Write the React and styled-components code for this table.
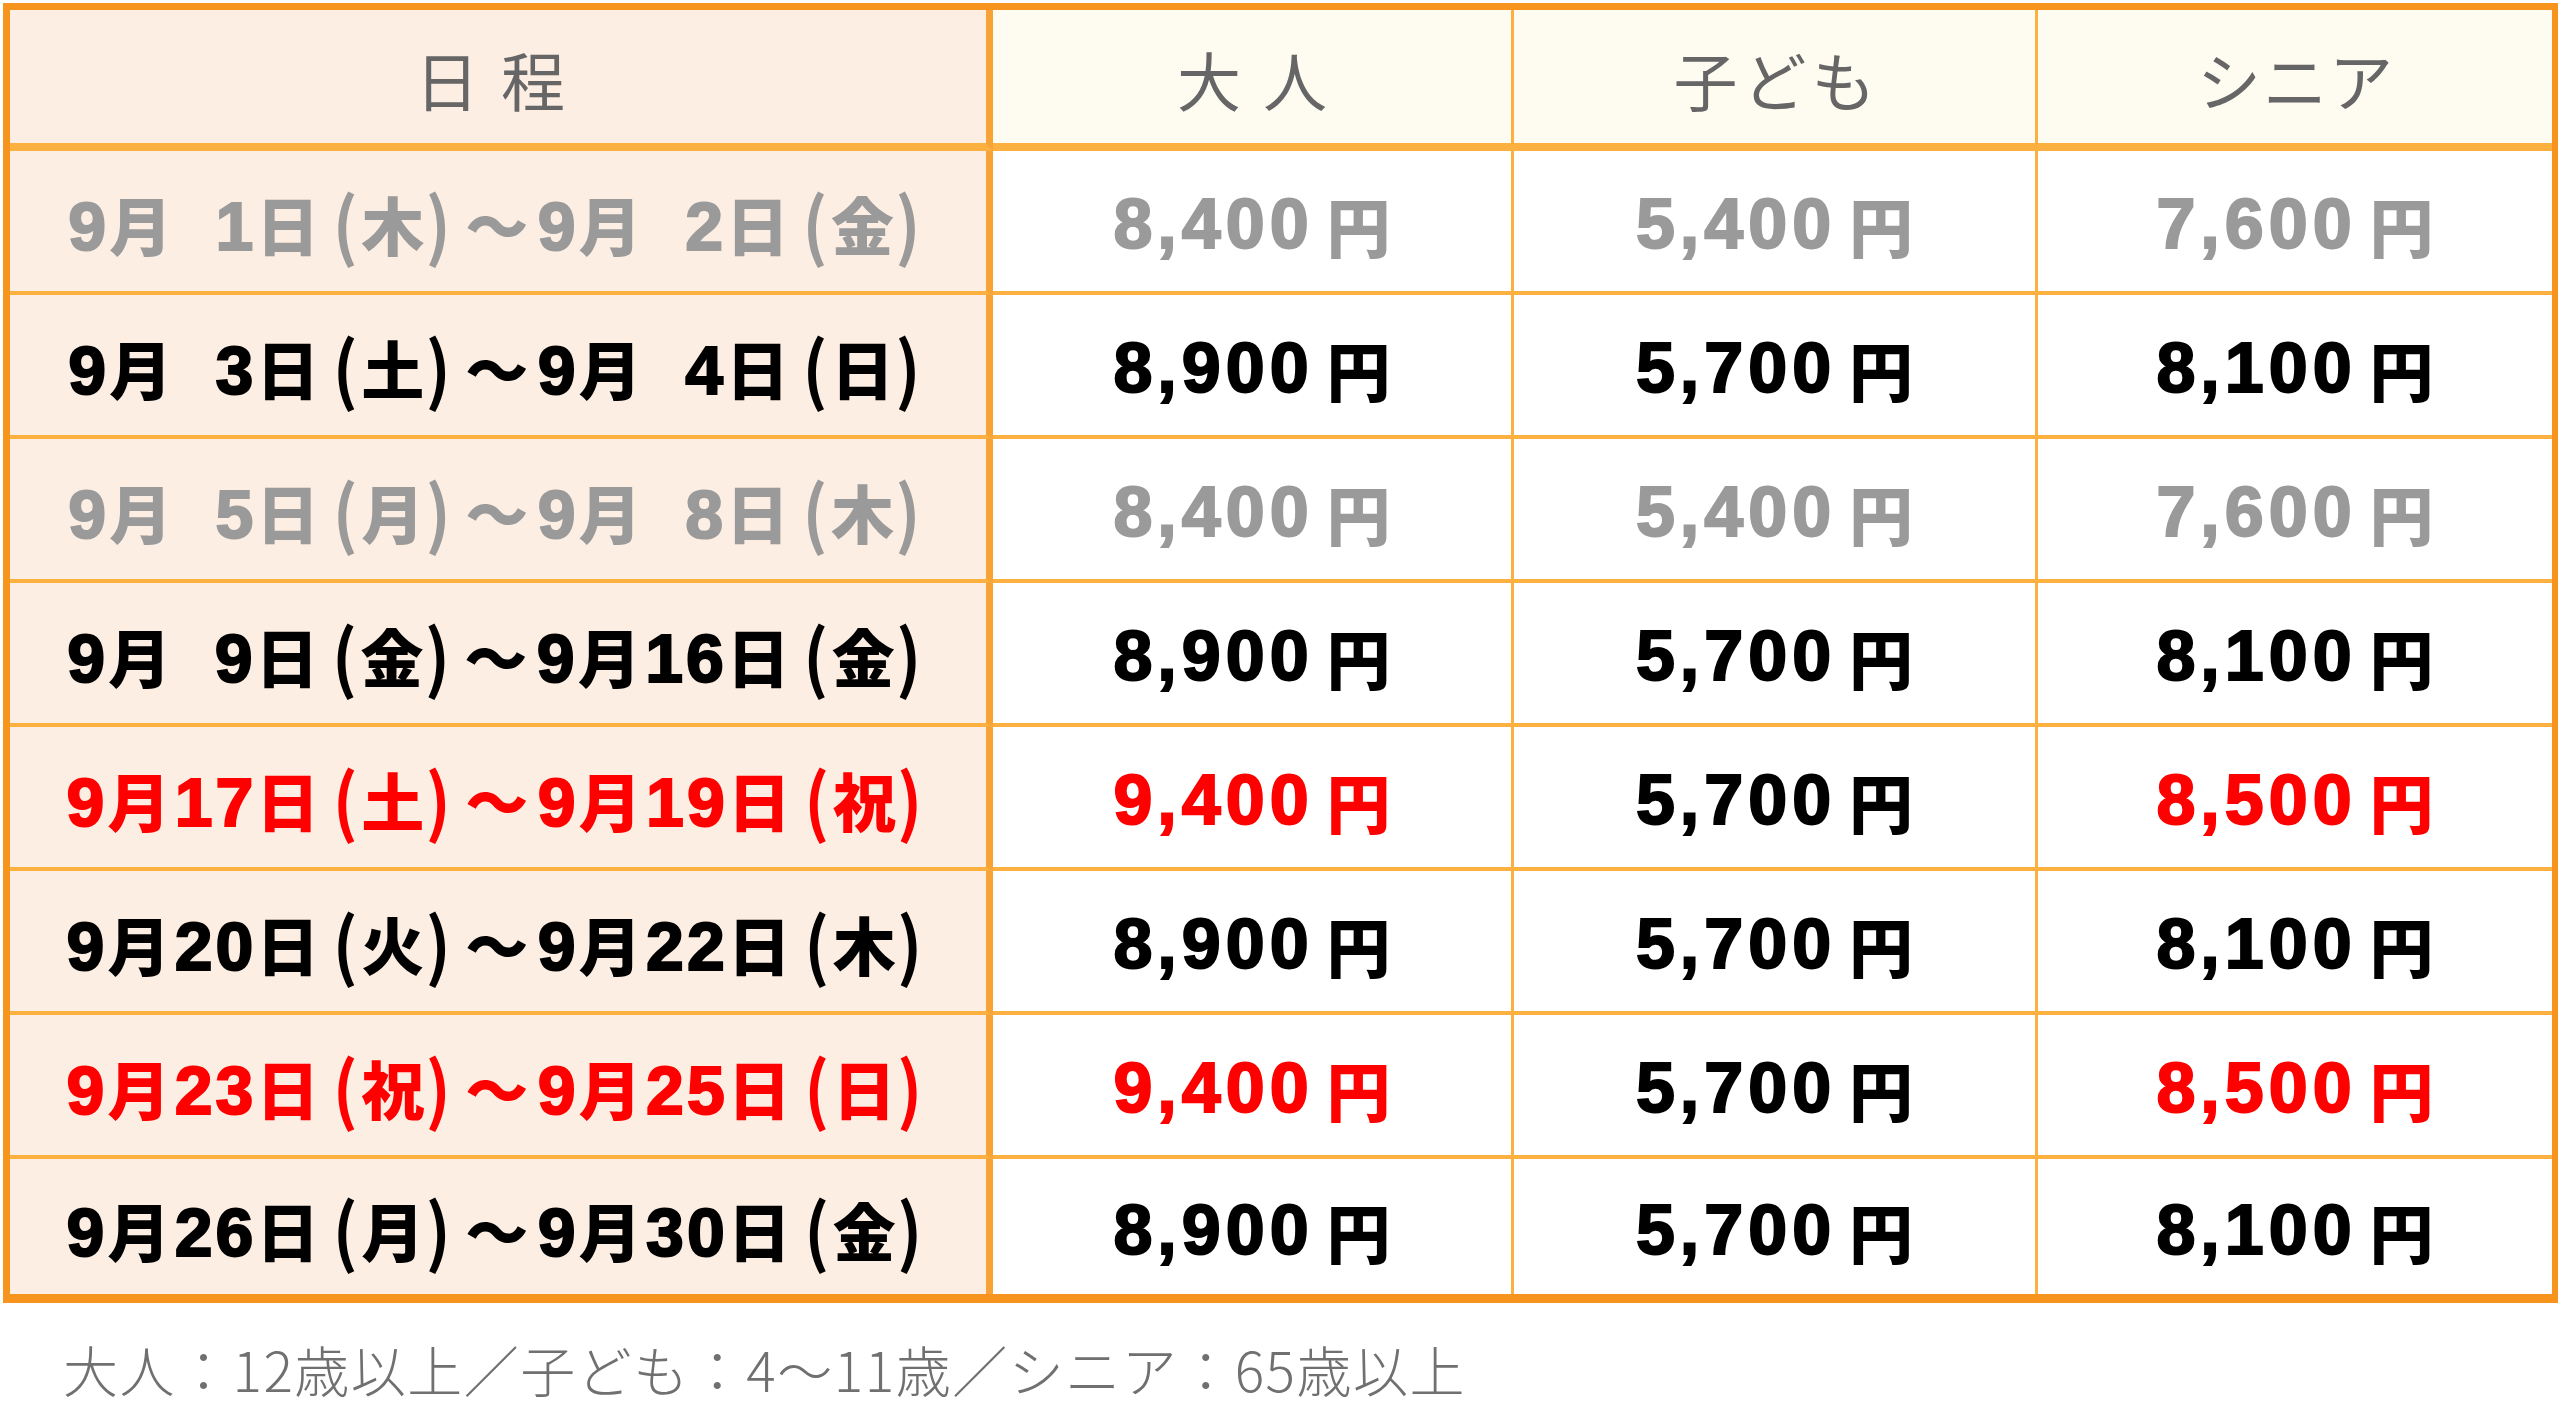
import React from "react";
import styled, { createGlobalStyle } from "styled-components";

const GlobalStyle = createGlobalStyle`
  html, body { margin: 0; padding: 0; background: #ffffff; }
  body { font-family: "Noto Sans CJK JP", "Noto Sans", sans-serif; }
`;

const Page = styled.div`
  width: 2560px;
  height: 1403px;
  box-sizing: border-box;
  padding: 3px 2px 0 3px;
  display: flex;
  flex-direction: column;
`;

const Table = styled.div`
  display: grid;
  grid-template-columns: 983px 521px 524px 1fr;
  grid-template-rows: 141px repeat(7, 144px) 135px;
  border: 7px solid #f7941d;
  border-bottom-width: 9px;
  border-right-width: 6px;
`;

const HeadCell = styled.div`
  display: flex;
  align-items: center;
  justify-content: center;
  background: ${(p) => (p.$first ? "#fdeee3" : "#fefbf0")};
  border-bottom: 8px solid #fbb03f;
  border-right: ${(p) => (p.$divider ? `${p.$divider}px solid ${p.$first ? "#f9a336" : "#fbb03f"}` : "none")};
  color: #666666;
  font-size: 64px;
  font-weight: 400;
  letter-spacing: ${(p) => p.$spacing || 0}px;
  text-indent: ${(p) => p.$indent ?? p.$spacing ?? 0}px;
  line-height: 1;
  padding-top: 2px;
`;

const colorFor = (tone) =>
  tone === "gray" ? "#9a9a9a" : tone === "red" ? "#ff0000" : "#000000";

const Cell = styled.div`
  display: flex;
  align-items: center;
  justify-content: center;
  background: ${(p) => (p.$first ? "#fdeee3" : "#ffffff")};
  border-bottom: ${(p) => (p.$last ? "none" : "4px solid #fbb03f")};
  border-right: ${(p) => (p.$divider ? `${p.$divider}px solid ${p.$first ? "#f9a336" : "#fbb03f"}` : "none")};
  color: ${(p) => colorFor(p.$tone)};
  font-weight: 900;
  line-height: 1;
  white-space: nowrap;
  padding-top: 6px;
`;

const DateText = styled.span`
  font-size: 63px;
  letter-spacing: 4.5px;
  margin-left: 2px;
`;

const Pad = styled.span`
  display: inline-block;
  width: 0.62em;
`;

const Paren = styled.span`
  display: inline-block;
  margin: ${(p) => (p.$close ? "0 5px 0 -3px" : "0 -1px 0 9px")};
  font-size: 66px;
  font-weight: 700;
  transform: scaleY(1.12);
`;

const Tilde = styled.span`
  margin: 0 5px;
`;

const Num = styled.span`
  font-family: "Liberation Sans", Arial, sans-serif;
  font-weight: 700;
  font-size: 70px;
  letter-spacing: 5px;
  -webkit-text-stroke: 2px currentColor;
`;

const DateNum = styled.span`
  font-family: "Liberation Sans", Arial, sans-serif;
  font-weight: 700;
  font-size: 68px;
  letter-spacing: 3px;
  -webkit-text-stroke: 2px currentColor;
`;

const Yen = styled.span`
  font-size: 64px;
  margin-left: 13px;
`;

const Note = styled.div`
  margin-top: 38px;
  padding-left: 60px;
  color: #707070;
  font-size: 55px;
  font-weight: 300;
  letter-spacing: 1.5px;
  line-height: 1;
`;

const rows = [
  { d: ["9", "月", " 1", "日", "木", "9", "月", " 2", "日", "金"], tone: ["gray", "gray", "gray", "gray"], p: ["8,400", "5,400", "7,600"] },
  { d: ["9", "月", " 3", "日", "土", "9", "月", " 4", "日", "日"], tone: ["black", "black", "black", "black"], p: ["8,900", "5,700", "8,100"] },
  { d: ["9", "月", " 5", "日", "月", "9", "月", " 8", "日", "木"], tone: ["gray", "gray", "gray", "gray"], p: ["8,400", "5,400", "7,600"] },
  { d: ["9", "月", " 9", "日", "金", "9", "月", "16", "日", "金"], tone: ["black", "black", "black", "black"], p: ["8,900", "5,700", "8,100"] },
  { d: ["9", "月", "17", "日", "土", "9", "月", "19", "日", "祝"], tone: ["red", "red", "black", "red"], p: ["9,400", "5,700", "8,500"] },
  { d: ["9", "月", "20", "日", "火", "9", "月", "22", "日", "木"], tone: ["black", "black", "black", "black"], p: ["8,900", "5,700", "8,100"] },
  { d: ["9", "月", "23", "日", "祝", "9", "月", "25", "日", "日"], tone: ["red", "red", "black", "red"], p: ["9,400", "5,700", "8,500"] },
  { d: ["9", "月", "26", "日", "月", "9", "月", "30", "日", "金"], tone: ["black", "black", "black", "black"], p: ["8,900", "5,700", "8,100"] },
];

const Day = ({ v }) =>
  v.startsWith(" ") ? (
    <>
      <Pad />
      <DateNum>{v.trim()}</DateNum>
    </>
  ) : (
    <DateNum>{v}</DateNum>
  );

const DateLabel = ({ d }) => (
  <DateText>
    <DateNum>{d[0]}</DateNum>
    {d[1]}
    <Day v={d[2]} />
    {d[3]}
    <Paren>(</Paren>
    {d[4]}
    <Paren $close>)</Paren>
    <Tilde>～</Tilde>
    <DateNum>{d[5]}</DateNum>
    {d[6]}
    <Day v={d[7]} />
    {d[8]}
    <Paren>(</Paren>
    {d[9]}
    <Paren $close>)</Paren>
  </DateText>
);

const Price = ({ v }) => (
  <>
    <Num>{v}</Num>
    <Yen>円</Yen>
  </>
);

const dividers = [7, 3, 3, 0];

export default function App() {
  return (
    <>
      <GlobalStyle />
      <Page>
        <Table>
          <HeadCell $first $divider={7} $spacing={22} $indent={6}>日程</HeadCell>
          <HeadCell $divider={3} $spacing={22}>大人</HeadCell>
          <HeadCell $divider={3} $spacing={5}>子ども</HeadCell>
          <HeadCell $spacing={2}>シニア</HeadCell>
          {rows.map((r, i) => {
            const last = i === rows.length - 1;
            return (
              <React.Fragment key={i}>
                <Cell $first $last={last} $divider={dividers[0]} $tone={r.tone[0]}>
                  <DateLabel d={r.d} />
                </Cell>
                {r.p.map((price, j) => (
                  <Cell key={j} $last={last} $divider={dividers[j + 1]} $tone={r.tone[j + 1]}>
                    <Price v={price} />
                  </Cell>
                ))}
              </React.Fragment>
            );
          })}
        </Table>
        <Note>大人：12歳以上／子ども：4～11歳／シニア：65歳以上</Note>
      </Page>
    </>
  );
}
